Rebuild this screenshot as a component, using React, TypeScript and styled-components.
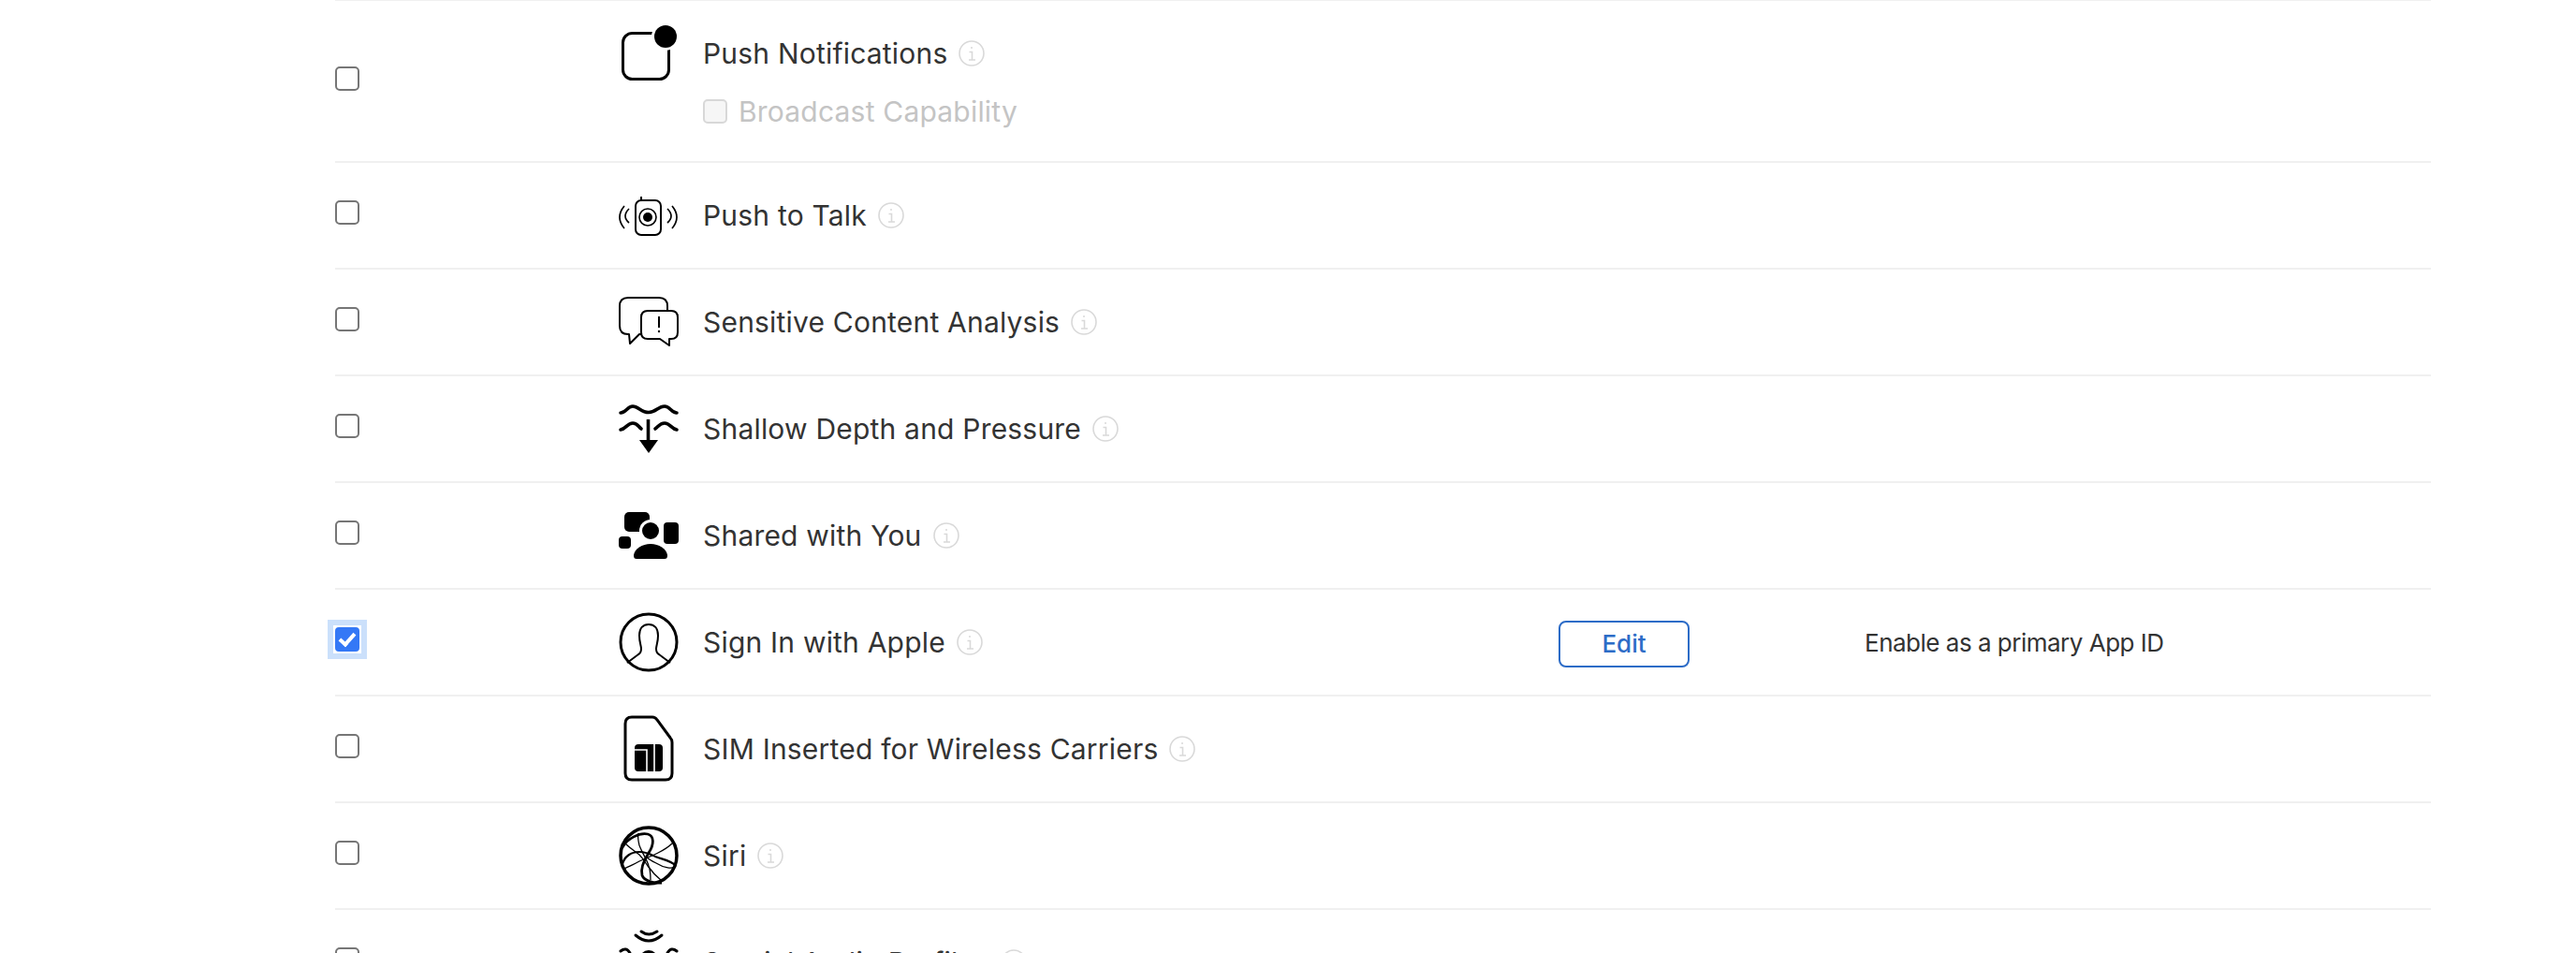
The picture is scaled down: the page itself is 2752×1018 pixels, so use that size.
import * as React from "react";
import styled, { createGlobalStyle } from "styled-components";

const GlobalStyle = createGlobalStyle`
  html, body {
    margin: 0;
    height: 1018px;
    overflow: hidden;
    background: #fff;
  }
  body {
    font-family: Inter, "Liberation Sans", sans-serif;
    color: #333;
  }
`;

const CapabilityList = styled.ul`
  list-style: none;
  margin: -1px 0 0 358px;
  padding: 0;
  width: 2239px;
  border-top: 2px solid #f0f0f0;
`;

const Row = styled.li`
  display: grid;
  grid-template-columns: 303px 1004px 327px 1fr;
  align-items: center;
  padding: 24px 0;
  border-bottom: 2px solid #f0f0f0;
`;

const SelectCell = styled.div`
  display: flex;
  align-items: center;
  margin-bottom: 6px;
`;

// square focus halo, the negative margin keeps the checkbox in its place
const FocusRing = styled.span<{ $focused?: boolean }>`
  display: flex;
  ${(p) =>
    p.$focused &&
    `
    margin: -8px;
    padding: 2px;
    background: #fff;
    border: 6px solid #cbe0fb;
  `}
`;

const CheckInput = styled.input`
  appearance: none;
  box-sizing: border-box;
  flex: none;
  width: 26px;
  height: 26px;
  margin: 0;
  background: #fff;
  border: 2px solid #767676;
  border-radius: 5px;

  &:checked {
    background: #3478f6;
    border-color: #3478f6;
    border-radius: 4px;
  }

  &:checked::after {
    content: "";
    display: block;
    width: 6px;
    height: 13px;
    margin: 1px auto 0;
    border: solid #fff;
    border-width: 0 4px 4px 0;
    transform: rotate(42deg);
  }

  &:disabled {
    background: #f6f6f6;
    border-color: #d8d8d8;
  }
`;

const Capability = styled.div`
  display: flex;
  align-items: flex-start;
  gap: 26px;
`;

const IconBox = styled.svg`
  flex: none;
  width: 64px;
  height: 64px;
  overflow: visible;
  color: #000;
`;

const LabelLine = styled.div`
  display: flex;
  align-items: center;
  gap: 12px;
  height: 64px;
`;

const Label = styled.span`
  font-size: 30px;
  letter-spacing: 0.2px;
  line-height: 36px;
`;

const SubOption = styled.div`
  display: flex;
  align-items: center;
  gap: 12px;
  height: 36px;
  margin: 12px 0 11px;
`;

const SubLabel = styled(Label)`
  color: #c4c4c4;
`;

const EditButton = styled.button`
  display: block;
  width: 140px;
  height: 50px;
  margin-top: 3px;
  padding: 0;
  background: #fff;
  border: 2px solid #2d6cc7;
  border-radius: 8px;
  color: #2d6cc7;
  font: 500 26px Inter, "Liberation Sans", sans-serif;
`;

const Note = styled.span`
  font-size: 26px;
  letter-spacing: -0.5px;
`;

const InfoIcon = () => (
  <svg width="28" height="28" viewBox="0 0 28 28" fill="none" stroke="#d9d9d9" strokeWidth="1.6">
    <circle cx="14" cy="14" r="13" />
    <path d="M11.5 12.5H14.5V21M11 21H18" />
    <circle cx="14" cy="8" r="1" fill="#d9d9d9" stroke="none" />
  </svg>
);

const PushIcon = () => (
  <IconBox viewBox="0 0 64 64" fill="none" stroke="currentColor" strokeWidth="3">
    <rect x="4.5" y="10.5" width="49" height="49" rx="10" />
    <circle cx="50" cy="14" r="15" fill="#fff" stroke="none" />
    <circle cx="50" cy="14" r="12" fill="currentColor" stroke="none" />
  </IconBox>
);

const TalkIcon = () => (
  <IconBox viewBox="0 0 64 64" fill="none" stroke="currentColor" strokeWidth="2">
    <rect x="18" y="16" width="27" height="37" rx="6" />
    <path d="M24 12V16" />
    <circle cx="31" cy="34" r="9" strokeWidth="1.6" />
    <circle cx="31" cy="34" r="5" fill="currentColor" stroke="none" />
    <path strokeWidth="1.7" d="M6 22Q-4 34 6 46M11 25Q3 33 11 40M57 22Q67 34 57 46M52 25Q60 33 52 40" />
  </IconBox>
);

const ChatIcon = () => (
  <IconBox viewBox="0 0 64 64" fill="#fff" stroke="currentColor" strokeWidth="2" strokeLinejoin="round">
    <path d="M10 6H43Q52 6 52 15V36Q52 45 43 45H22L12 55L11 45H10Q1 45 1 36V15Q1 6 10 6Z" />
    <path d="M31 20H56Q63 20 63 27V43Q63 50 56 50H54V57L44 50H31Q24 50 24 43V27Q24 20 31 20Z" />
    <path d="M43 26V38" fill="none" />
    <circle cx="43" cy="42" r="1.2" fill="currentColor" stroke="none" />
  </IconBox>
);

const DepthIcon = () => (
  <IconBox viewBox="0 0 64 64" fill="none" stroke="currentColor" strokeWidth="3.6" strokeLinecap="round">
    <path d="M2 15C8 15 9 8 15 8C21 8 24 14.5 32 14.5C40 14.5 42 8 49 8C55 8 56 15 62 15" />
    <path d="M2 33C8 32 9 26 15 26C20 26 21 30 24 32M39 32C42 30 44 26 49 26C55 26 56 32 62 33" />
    <path d="M31.5 22V46" strokeLinecap="butt" />
    <path d="M22 44H42L32 58Z" fill="currentColor" stroke="none" />
  </IconBox>
);

const SharedIcon = () => (
  <IconBox viewBox="0 0 64 64" fill="currentColor">
    <rect x="6" y="7" width="27" height="21" rx="5" />
    <circle cx="34" cy="27" r="12" fill="#fff" />
    <circle cx="34" cy="27" r="9" />
    <rect x="48" y="18" width="16" height="23" rx="4" />
    <rect x="0" y="33" width="13" height="13" rx="4" />
    <path d="M16 53C17 46 25 41 34 41C43 41 51 46 52 53C52 56 51 57 49 57H19C17 57 16 56 16 53Z" />
  </IconBox>
);

const AppleIdIcon = () => (
  <IconBox viewBox="0 0 64 64" fill="none" stroke="currentColor" strokeWidth="2">
    <circle cx="32" cy="32" r="30" strokeWidth="3" />
    <path d="M9 54L21 45C23 44 24 42 24 39C24 36 22 32 22 25C22 17 26 13 32 13C38 13 42 17 42 25C42 32 40 36 40 39C40 42 41 44 43 45L55 54" />
  </IconBox>
);

const SimIcon = () => (
  <IconBox viewBox="0 0 64 64" fill="none" stroke="currentColor" strokeWidth="3">
    <path d="M14 -2H36Q39 -2 41 1L55 20Q57 22 57 25V58Q57 65 50 65H14Q7 65 7 58V5Q7 -2 14 -2Z" />
    <rect x="17" y="27" width="30" height="29" rx="4" fill="currentColor" stroke="none" />
    <path d="M17 33H30V56M38 27V56" stroke="#fff" strokeWidth="1.6" />
  </IconBox>
);

const SiriIcon = () => (
  <IconBox viewBox="0 0 64 64" fill="none" stroke="currentColor" strokeWidth="1.3">
    <circle cx="32" cy="32" r="30" strokeWidth="3.5" />
    <path strokeWidth="2.8" d="M4 23C9 14 22 7 31 9C38 11 38 20 32 29C27 37 23 46 25 53C27 59 38 62 46 61" />
    <path strokeWidth="2.2" d="M4 41C6 33 13 28 22 28C30 28 35 31 39 33C46 36 56 37 61 43" />
    <path d="M61 43C58 47 48 45 40 40C36 38 32 36 29 33" />
    <path d="M7 19C12 24 17 27 22 31C26 35 28 39 31 43C36 50 41 55 46 59" />
    <path d="M21 8C20 13 21 17 22 21C25 29 30 36 32 43C34 48 34 53 34 58" />
    <path d="M6 46C12 43 17 41 22 38C29 35 36 32 42 29C48 26 53 23 57 19" />
  </IconBox>
);

const SpatialIcon = () => (
  <IconBox viewBox="0 0 64 64" fill="none" stroke="currentColor" strokeWidth="3" strokeLinecap="round">
    <path d="M24 -1Q32 5 41 -1" />
    <path d="M18 3Q32 15 46 3" />
    <circle cx="32" cy="29" r="10" fill="currentColor" stroke="none" />
    <path d="M2 20Q8 15 12 22M52 22Q56 15 62 20" />
  </IconBox>
);

const capabilities = [
  { name: "Push Notifications", Icon: PushIcon, sub: "Broadcast Capability" },
  { name: "Push to Talk", Icon: TalkIcon },
  { name: "Sensitive Content Analysis", Icon: ChatIcon },
  { name: "Shallow Depth and Pressure", Icon: DepthIcon },
  { name: "Shared with You", Icon: SharedIcon },
  { name: "Sign In with Apple", Icon: AppleIdIcon, enabled: true, note: "Enable as a primary App ID" },
  { name: "SIM Inserted for Wireless Carriers", Icon: SimIcon },
  { name: "Siri", Icon: SiriIcon },
  { name: "Spatial Audio Profiles", Icon: SpatialIcon },
];

export default function App() {
  return (
    <>
      <GlobalStyle />
      <CapabilityList>
        {capabilities.map(({ name, Icon, sub, enabled, note }) => (
          <Row key={name}>
            <SelectCell>
              <FocusRing $focused={enabled}>
                <CheckInput type="checkbox" checked={!!enabled} readOnly />
              </FocusRing>
            </SelectCell>
            <Capability>
              <Icon />
              <div>
                <LabelLine>
                  <Label>{name}</Label>
                  <InfoIcon />
                </LabelLine>
                {sub && (
                  <SubOption>
                    <CheckInput type="checkbox" disabled />
                    <SubLabel>{sub}</SubLabel>
                  </SubOption>
                )}
              </div>
            </Capability>
            <div>{enabled && <EditButton>Edit</EditButton>}</div>
            <div>{note && <Note>{note}</Note>}</div>
          </Row>
        ))}
      </CapabilityList>
    </>
  );
}
